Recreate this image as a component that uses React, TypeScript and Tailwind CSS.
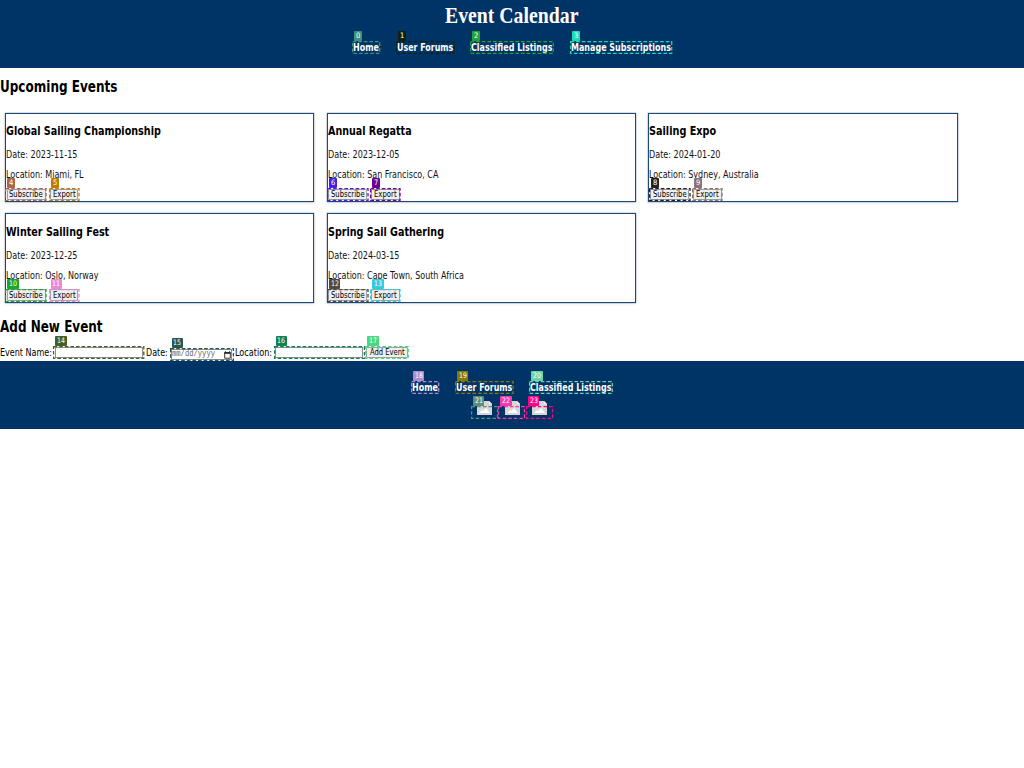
import { useLayoutEffect, useRef } from "react";

type Font = "sans" | "bold" | "serif" | "mono";
const fonts: Record<Font, string> = {
  sans: "font-['DejaVu_Sans',sans-serif]",
  bold: "font-['DejaVu_Sans',sans-serif] font-bold",
  serif: "font-['Liberation_Serif',serif] font-bold",
  mono: "font-['Liberation_Mono',monospace]",
};

/* A single line of text fitted to a fixed advance width. */
function Fit({ text, w, font = "sans", cls = "" }: { text: string; w: number; font?: Font; cls?: string }) {
  const ref = useRef<HTMLSpanElement>(null);
  useLayoutEffect(() => {
    const el = ref.current;
    if (!el) return;
    el.style.transform = "none";
    el.style.transform = `scaleX(${w / el.getBoundingClientRect().width})`;
  }, [text, w]);
  return (
    <span className={`block shrink-0 ${fonts[font]} ${cls}`} style={{ width: w }}>
      <span ref={ref} className="inline-block origin-left whitespace-nowrap align-top">{text}</span>
    </span>
  );
}

/* Dashed marker frame with a numbered tag above it. */
function Mark({ n, color, w, h = 13, tagX = 2, children }: {
  n: number; color: string; w: number; h?: number; tagX?: number; children?: React.ReactNode;
}) {
  return (
    <div className="relative flex shrink-0 items-center justify-center" style={{ width: w, height: h }}>
      {children}
      <svg className="pointer-events-none absolute inset-0 overflow-visible" width={w} height={h}>
        <rect x={0.6} y={0.6} width={w - 1.2} height={h - 1.2} fill="none" stroke={color} strokeWidth={1.3} strokeDasharray="3.6 2" />
      </svg>
      <span
        className="absolute top-[-10px] flex h-[10.4px] items-center justify-center rounded-[1px] text-[7.5px] leading-[10px] text-white"
        style={{ left: tagX, width: n > 9 ? 11.4 : 8, background: color }}
      >
        <Fit text={String(n)} w={n > 9 ? 8 : 4.3} />
      </span>
    </div>
  );
}

function Button({ text, w, tw }: { text: string; w: number; tw: number }) {
  return (
    <button className="flex h-[11.5px] shrink-0 items-center justify-center rounded-[1px] border border-[#a0a0a0] bg-[#efefef] text-black" style={{ width: w }}>
      <Fit text={text} w={tw} cls="text-[9.5px] leading-[10px]" />
    </button>
  );
}

type Ev = { t: string; tw: number; d: string; l: string; lw: number; n: number; c: [string, string] };
const events: Ev[] = [
  { t: "Global Sailing Championship", tw: 154.8, d: "2023-11-15", l: "Miami, FL", lw: 77.6, n: 4, c: ["#ae6647", "#bd7b07"] },
  { t: "Annual Regatta", tw: 83.6, d: "2023-12-05", l: "San Francisco, CA", lw: 110.4, n: 6, c: ["#4b1de0", "#6d0391"] },
  { t: "Sailing Expo", tw: 67.2, d: "2024-01-20", l: "Sydney, Australia", lw: 109.6, n: 8, c: ["#252128", "#8d7279"] },
  { t: "Winter Sailing Fest", tw: 103.2, d: "2023-12-25", l: "Oslo, Norway", lw: 92.5, n: 10, c: ["#1ca52b", "#e78bd3"] },
  { t: "Spring Sail Gathering", tw: 116, d: "2024-03-15", l: "Cape Town, South Africa", lw: 135.8, n: 12, c: ["#524840", "#39c8dc"] },
];

function Card({ e }: { e: Ev }) {
  return (
    <article className="h-[89.4px] w-[309.2px] border border-[#1c4a7a] pt-[9.3px] shadow-[0_0_0_0.4px_rgba(0,51,102,0.35),0_1px_3px_rgba(0,0,0,0.1)]">
      <Fit text={e.t} w={e.tw} font="bold" cls="h-4 text-[11.6px] leading-[16px]" />
      <Fit text={`Date: ${e.d}`} w={71.4} cls="mt-[8.2px] h-[14px] text-[10.5px] leading-[14px] text-[#111]" />
      <Fit text={`Location: ${e.l}`} w={e.lw} cls="mt-[6px] h-[14px] text-[10.5px] leading-[14px] text-[#111]" />
      <div className="-ml-[0.8px] mt-[6.8px] flex gap-[1.8px]">
        <Mark n={e.n} color={e.c[0]} w={41.6}><Button text="Subscribe" w={39} tw={33.6} /></Mark>
        <Mark n={e.n + 1} color={e.c[1]} w={30.6}><Button text="Export" w={28.6} tw={22.6} /></Mark>
      </div>
    </article>
  );
}

function NavLink({ n, color, text, w }: { n: number; color: string; text: string; w: number }) {
  return (
    <a className="block">
      <Mark n={n} color={color} w={w + 2.4}>
        <Fit text={text} w={w} font="bold" cls="text-[10.5px] leading-[13px] text-white" />
      </Mark>
    </a>
  );
}

function Picture() {
  return (
    <svg width="15" height="14" viewBox="0 0 15 14" className="relative -top-[4px]">
      <path d="M0 0H12L15 3V14H0Z" fill="#d6d6d6" />
      <path d="M12 0V3H15Z" fill="#efefef" />
      <path d="M2 12L5 9L6.2 10L9 7L13 12Z" fill="#fff" />
    </svg>
  );
}

export default function App() {
  return (
    <div className="min-h-screen w-[1024px] overflow-hidden bg-white text-black">
      <header className="flex h-[68px] flex-col items-center bg-[#003366]">
        <Fit text="Event Calendar" w={133.4} font="serif" cls="mt-1 h-6 text-[23.5px] leading-[23px] text-white" />
        <nav className="mt-[13px] flex gap-[15.6px]">
          <NavLink n={0} color="#3f917e" text="Home" w={25.9} />
          <NavLink n={1} color="#10220f" text="User Forums" w={56.3} />
          <NavLink n={2} color="#27a036" text="Classified Listings" w={81.5} />
          <NavLink n={3} color="#1bdcb4" text="Manage Subscriptions" w={99.9} />
        </nav>
      </header>
      <main className="h-[293px]">
        <Fit text="Upcoming Events" w={117.4} font="bold" cls="pt-[9px] h-[29px] text-[15.5px] leading-[20px]" />
        <section className="flex flex-wrap gap-x-[12.5px] gap-y-[11.4px] pl-[5.1px] pt-[15.6px]">
          {events.map((e) => <Card key={e.t} e={e} />)}
        </section>
        <Fit text="Add New Event" w={102.6} font="bold" cls="mt-[14px] h-5 text-[15.5px] leading-[20px]" />
        <form className="mt-[9px] flex items-start text-[10.5px] leading-[13px]">
          <Fit text="Event Name:" w={52} />
          <div className="ml-[1.4px]"><Mark n={14} color="#425f28" w={91.4}><span className="h-[11px] w-[88.6px] border border-[#909090] bg-white" /></Mark></div>
          <Fit text="Date:" w={21.8} cls="ml-[1.6px]" />
          <div className="ml-[1.4px] mt-[2px]">
            <Mark n={15} color="#285750" w={64}>
              <span className="flex h-[11px] w-[61.6px] items-center border border-[#909090] bg-white pl-[.6px]">
                <Fit text="mm/dd/yyyy" w={43} font="mono" cls="text-[9px] leading-[9px] text-[#666]" />
                <svg width="7" height="8" viewBox="0 0 7 8" className="ml-[8.4px] mt-[2px]"><path d="M.7 1.6H6.3V7.2H.7Z" fill="none" stroke="#222" strokeWidth=".9" /><path d="M.3 1.2H6.7V2.8H.3ZM1 .3H2V1.4H1ZM5 .3H6V1.4H5Z" fill="#222" /></svg>
              </span>
            </Mark>
          </div>
          <Fit text="Location:" w={37} cls="ml-[1.8px]" />
          <div className="ml-[1.2px]"><Mark n={16} color="#108050" w={91}><span className="h-[11px] w-[88.6px] border border-[#909090] bg-white" /></Mark></div>
          <div className="ml-[.8px]"><Mark n={17} color="#48d87d" w={43.8}><Button text="Add Event" w={42} tw={34.6} /></Mark></div>
        </form>
      </main>
      <footer className="flex h-[68px] flex-col items-center bg-[#003366] pt-[19.6px]">
        <nav className="flex gap-[15.6px]">
          <NavLink n={18} color="#ad8bd1" text="Home" w={25.9} />
          <NavLink n={19} color="#897807" text="User Forums" w={56.3} />
          <NavLink n={20} color="#68d5aa" text="Classified Listings" w={81.5} />
        </nav>
        <div className="mt-[12.4px] flex gap-[.4px]">
          <Mark n={21} color="#5c8e7b" w={27.1}><Picture /></Mark>
          <Mark n={22} color="#f13bae" w={27.1}><Picture /></Mark>
          <Mark n={23} color="#f80786" w={27.1}><Picture /></Mark>
        </div>
      </footer>
    </div>
  );
}
